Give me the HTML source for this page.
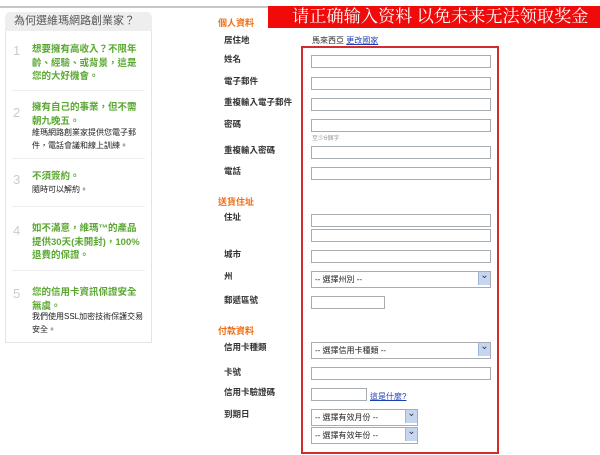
<!DOCTYPE html>
<html><head><meta charset="utf-8"><style>
*{margin:0;padding:0;box-sizing:border-box}
body{width:600px;height:455px;background:#fff;position:relative;overflow:hidden;font-family:"Liberation Sans","Noto Sans CJK TC",sans-serif;}
.a{position:absolute;white-space:nowrap}
.line{left:0;top:6px;width:268px;height:2px;background:#c8c8c8}
.banner{left:268px;top:6px;width:332px;height:22px;background:#f00a0a;color:#fff;font-family:"Liberation Serif","Noto Serif CJK SC",serif;font-size:17.2px;line-height:22px;padding-left:24px}
.panel{left:5px;top:12px;width:147px;height:331px;border:1px solid #e4e4e4;border-radius:6px 6px 0 0}
.ph{left:5px;top:12px;width:147px;height:19px;background:#eee;border-radius:6px 6px 0 0;font-size:11px;color:#555;line-height:19px;padding-left:9px}
.num{font-size:13px;color:#ccc;left:13px}
.g{font-size:9.5px;color:#5aa832;font-weight:bold;line-height:13.5px;left:32px;width:110px;white-space:normal}
.b{font-size:8px;color:#222;line-height:13px;left:32px;width:112px;white-space:normal}
.sep{left:12px;width:133px;height:1px;background:#eee}
.sec{font-size:9px;color:#ef6c12;font-weight:bold;left:218px}
.lb{font-size:8.5px;color:#333;font-weight:bold;left:224px}
.box{left:301px;top:46px;width:198px;height:408px;border:2px solid #d42b2b}
.in{left:311px;width:180px;height:13px;border:1px solid #a5acb2;background:#fff}
.sel{left:311px;width:180px;height:17px;border:1px solid #a5acb2;background:#fff;font-size:8px;line-height:16px;padding-left:3px;color:#222}
.sel:after{content:"⌄";position:absolute;right:0;top:0;width:11px;height:13px;background:#c7d6ef;border-left:1px solid #9eb5d8;color:#335;font-size:10px;line-height:8px;text-align:center}
.lk{color:#1a3fb3;text-decoration:underline;font-size:8px}
</style></head><body>
<div class="a line"></div>
<div class="a banner">请正确输入资料 以免未来无法领取奖金</div>
<div class="a panel"></div>
<div class="a ph">為何選維瑪網路創業家？</div>
<div class="a num" style="top:43px">1</div>
<div class="a g" style="top:43px">想要擁有高收入？不限年齡、經驗、或背景，這是您的大好機會。</div>
<div class="a sep" style="top:90px"></div>
<div class="a num" style="top:105px">2</div>
<div class="a g" style="top:101px">擁有自己的事業，但不需朝九晚五。</div>
<div class="a b" style="top:126px">維瑪網路創業家提供您電子郵件，電話會議和線上訓練。</div>
<div class="a sep" style="top:158px"></div>
<div class="a num" style="top:172px">3</div>
<div class="a g" style="top:170px">不須簽約。</div>
<div class="a b" style="top:183px">隨時可以解約。</div>
<div class="a sep" style="top:206px"></div>
<div class="a num" style="top:223px">4</div>
<div class="a g" style="top:222px">如不滿意，維瑪™的產品提供30天(未開封)，100%退費的保證。</div>
<div class="a sep" style="top:270px"></div>
<div class="a num" style="top:286px">5</div>
<div class="a g" style="top:286px">您的信用卡資訊保證安全無虞。</div>
<div class="a b" style="top:310px">我們使用SSL加密技術保護交易安全。</div>

<div class="a box"></div>
<div class="a sec" style="top:16px">個人資料</div>
<div class="a lb" style="top:34px">居住地</div>
<div class="a" style="left:312px;top:35px;font-size:8px;color:#222">馬來西亞 <span class="lk">更改國家</span></div>
<div class="a lb" style="top:53px">姓名</div><div class="a in" style="top:55px"></div>
<div class="a lb" style="top:75px">電子郵件</div><div class="a in" style="top:77px"></div>
<div class="a lb" style="top:96px">重複輸入電子郵件</div><div class="a in" style="top:98px"></div>
<div class="a lb" style="top:118px">密碼</div><div class="a in" style="top:119px"></div>
<div class="a" style="left:312px;top:133px;font-size:6px;color:#999">至少6個字</div>
<div class="a lb" style="top:144px">重複輸入密碼</div><div class="a in" style="top:146px"></div>
<div class="a lb" style="top:165px">電話</div><div class="a in" style="top:167px"></div>
<div class="a sec" style="top:195px">送貨住址</div>
<div class="a lb" style="top:211px">住址</div><div class="a in" style="top:214px"></div><div class="a in" style="top:229px"></div>
<div class="a lb" style="top:248px">城市</div><div class="a in" style="top:250px"></div>
<div class="a lb" style="top:270px">州</div><div class="a sel" style="top:271px">-- 選擇州別 --</div>
<div class="a lb" style="top:294px">郵遞區號</div><div class="a in" style="top:296px;width:74px"></div>
<div class="a sec" style="top:324px">付款資料</div>
<div class="a lb" style="top:341px">信用卡種類</div><div class="a sel" style="top:342px">-- 選擇信用卡種類 --</div>
<div class="a lb" style="top:366px">卡號</div><div class="a in" style="top:367px"></div>
<div class="a lb" style="top:386px">信用卡驗證碼</div><div class="a in" style="top:388px;width:56px"></div>
<div class="a lk" style="left:370px;top:391px">這是什麼?</div>
<div class="a lb" style="top:408px">到期日</div>
<div class="a sel" style="top:409px;width:107px">-- 選擇有效月份 --</div>
<div class="a sel" style="top:427px;width:107px">-- 選擇有效年份 --</div>
</body></html>
